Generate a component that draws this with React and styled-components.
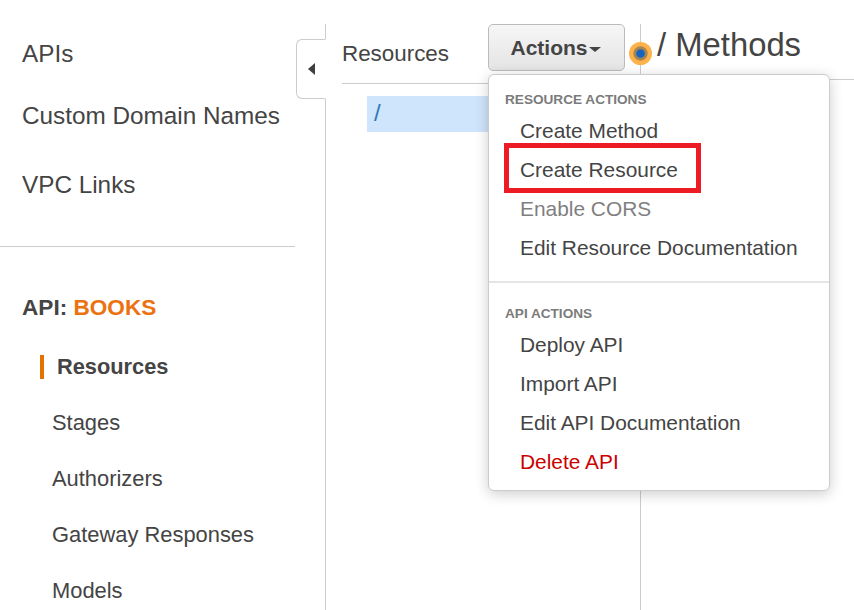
import React from 'react';
import styled, { createGlobalStyle } from 'styled-components';

const GlobalStyle = createGlobalStyle`
  html, body {
    margin: 0;
    padding: 0;
    background: #fff;
    overflow: hidden;
  }
  body {
    font-family: 'Liberation Sans', Arial, sans-serif;
    color: #444;
  }
`;

// Three columns: left nav, resource tree, method area
const Page = styled.div`
  display: grid;
  grid-template-columns: 326px 315px 1fr;
  width: 854px;
  height: 610px;
  padding-top: 24px;
  box-sizing: border-box;
  overflow: hidden;
  position: relative;
`;

const Sidebar = styled.nav`
  position: relative;
  border-right: 1px solid #ccc;
  display: flex;
  flex-direction: column;
`;

const TopLinks = styled.div`
  display: flex;
  flex-direction: column;
  padding: 12px 0 43px 22px;
  margin-right: 30px;
  border-bottom: 1px solid #ccc;
`;

const TopLink = styled.a`
  font-size: 24.3px;
  line-height: 36px;
  margin-bottom: ${(p) => p.$gap}px;
  color: #444;
`;

const ApiTitle = styled.div`
  font-size: 22.6px;
  font-weight: bold;
  line-height: 28px;
  margin: 47px 0 0 22px;
  color: #444;
`;

const ApiName = styled.span`
  color: #ec7211;
`;

const SubNav = styled.div`
  display: flex;
  flex-direction: column;
  margin-top: 31px;
  padding-left: 40px;
  gap: 28px;
`;

const SubLink = styled.a`
  font-size: 21.9px;
  line-height: 28px;
  padding-left: 12px;
  color: #444;
`;

const ActiveLink = styled.a`
  font-size: 21.8px;
  font-weight: bold;
  line-height: 24px;
  margin: 2px 0;
  padding-left: 13px;
  border-left: 4px solid #e47100;
  color: #444;
`;

const CollapseTab = styled.div`
  position: absolute;
  top: 15px;
  right: -1px;
  width: 28px;
  height: 58px;
  background: #fff;
  border: 1px solid #ccc;
  border-right: 1px solid #fff;
  border-radius: 6px 0 0 6px;
  display: flex;
  align-items: center;
  justify-content: center;
`;

const TreeColumn = styled.section`
  border-right: 1px solid #ccc;
  padding-left: 16px;
`;

const TreeHeader = styled.div`
  display: flex;
  align-items: center;
  justify-content: space-between;
  height: 60px;
  box-sizing: border-box;
  border-bottom: 1px solid #ccc;
`;

const TreeTitle = styled.h2`
  margin: 0;
  font-size: 22.4px;
  font-weight: normal;
  color: #444;
`;

const ActionsButton = styled.button`
  width: 137px;
  height: 47px;
  margin: 0 15px 12px 0;
  border: 1px solid #bbb;
  border-radius: 5px;
  background: linear-gradient(#f6f6f6, #e4e4e4);
  font-family: inherit;
  font-size: 21px;
  font-weight: bold;
  color: #444;
  display: flex;
  align-items: center;
  justify-content: center;
  gap: 1px;
  padding: 0 2px 0 0;
`;

const Caret = styled.span`
  width: 0;
  height: 0;
  margin-top: 3px;
  border-left: 6px solid transparent;
  border-right: 6px solid transparent;
  border-top: 5px solid #444;
`;

const TreeRow = styled.div`
  margin: 12px 0 0 25px;
  height: 36px;
  padding-left: 7px;
  background: #cfe5fb;
  font-size: 24px;
  line-height: 34px;
  color: #337ab7;
`;

const MethodColumn = styled.section`
  display: block;
`;

const MethodHeader = styled.div`
  height: 56px;
  box-sizing: border-box;
  padding-left: 16px;
  border-bottom: 1px solid #ccc;
`;

const MethodTitle = styled.h1`
  margin: 0;
  font-size: 32.8px;
  font-weight: normal;
  line-height: 42px;
  color: #444;
`;

const Marker = styled.svg`
  position: absolute;
  left: 629px;
  top: 42px;
`;

const Menu = styled.div`
  position: absolute;
  left: 488px;
  top: 74px;
  width: 342px;
  height: 417px;
  box-sizing: border-box;
  background: #fff;
  border: 1px solid #ccc;
  border-radius: 6px;
  box-shadow: 0 3px 14px rgba(0, 0, 0, 0.2);
`;

const MenuGroup = styled.div`
  display: flex;
  flex-direction: column;
  padding-top: ${(p) => p.$top}px;
`;

const GroupLabel = styled.div`
  font-size: 13.6px;
  font-weight: bold;
  line-height: 16px;
  margin: 0 0 3px 16px;
  color: #7b7b7b;
`;

const MenuItem = styled.a`
  font-size: 20.9px;
  line-height: 39px;
  padding-left: 31px;
  color: ${(p) => p.$color || '#444'};
`;

const MenuDivider = styled.div`
  height: 2px;
  background: #e5e5e5;
  margin-top: 14px;
`;

const Highlight = styled.div`
  position: absolute;
  left: 15px;
  top: 68px;
  width: 197px;
  height: 50px;
  box-sizing: border-box;
  border: 5px solid #ed1c24;
`;

const resourceActions = [
  { label: 'Create Method' },
  { label: 'Create Resource' },
  { label: 'Enable CORS', color: '#7f7f7f' },
  { label: 'Edit Resource Documentation' },
];

const apiActions = [
  { label: 'Deploy API' },
  { label: 'Import API' },
  { label: 'Edit API Documentation' },
  { label: 'Delete API', color: '#cc0000' },
];

const subLinks = ['Stages', 'Authorizers', 'Gateway Responses', 'Models'];

const App = () => {
  return (
    <Page>
      <GlobalStyle />
      <Sidebar>
        <TopLinks>
          <TopLink $gap={26}>APIs</TopLink>
          <TopLink $gap={33}>Custom Domain Names</TopLink>
          <TopLink $gap={0}>VPC Links</TopLink>
        </TopLinks>
        <ApiTitle>
          API: <ApiName>BOOKS</ApiName>
        </ApiTitle>
        <SubNav>
          <ActiveLink>Resources</ActiveLink>
          {subLinks.map((name) => (
            <SubLink key={name}>{name}</SubLink>
          ))}
        </SubNav>
        <CollapseTab>
          <svg width="9" height="14" viewBox="0 0 9 14">
            <path d="M8 1 L1 7 L8 13 Z" fill="#3f3f3f" />
          </svg>
        </CollapseTab>
      </Sidebar>

      <TreeColumn>
        <TreeHeader>
          <TreeTitle>Resources</TreeTitle>
          <ActionsButton>
            Actions
            <Caret />
          </ActionsButton>
        </TreeHeader>
        <TreeRow>/</TreeRow>
      </TreeColumn>

      <MethodColumn>
        <MethodHeader>
          <MethodTitle>/ Methods</MethodTitle>
        </MethodHeader>
      </MethodColumn>

      <Marker width="23" height="23" viewBox="0 0 24 24">
        <circle cx="12" cy="12" r="12" fill="#fdb24a" />
        <circle cx="12" cy="12" r="7.5" fill="#a88450" />
        <circle cx="12" cy="12" r="4.5" fill="#1565c0" />
      </Marker>

      <Menu>
        <MenuGroup $top={17}>
          <GroupLabel>RESOURCE ACTIONS</GroupLabel>
          {resourceActions.map((item) => (
            <MenuItem key={item.label} $color={item.color}>
              {item.label}
            </MenuItem>
          ))}
        </MenuGroup>
        <MenuDivider />
        <MenuGroup $top={23}>
          <GroupLabel>API ACTIONS</GroupLabel>
          {apiActions.map((item) => (
            <MenuItem key={item.label} $color={item.color}>
              {item.label}
            </MenuItem>
          ))}
        </MenuGroup>
        <Highlight />
      </Menu>
    </Page>
  );
};

export default App;
